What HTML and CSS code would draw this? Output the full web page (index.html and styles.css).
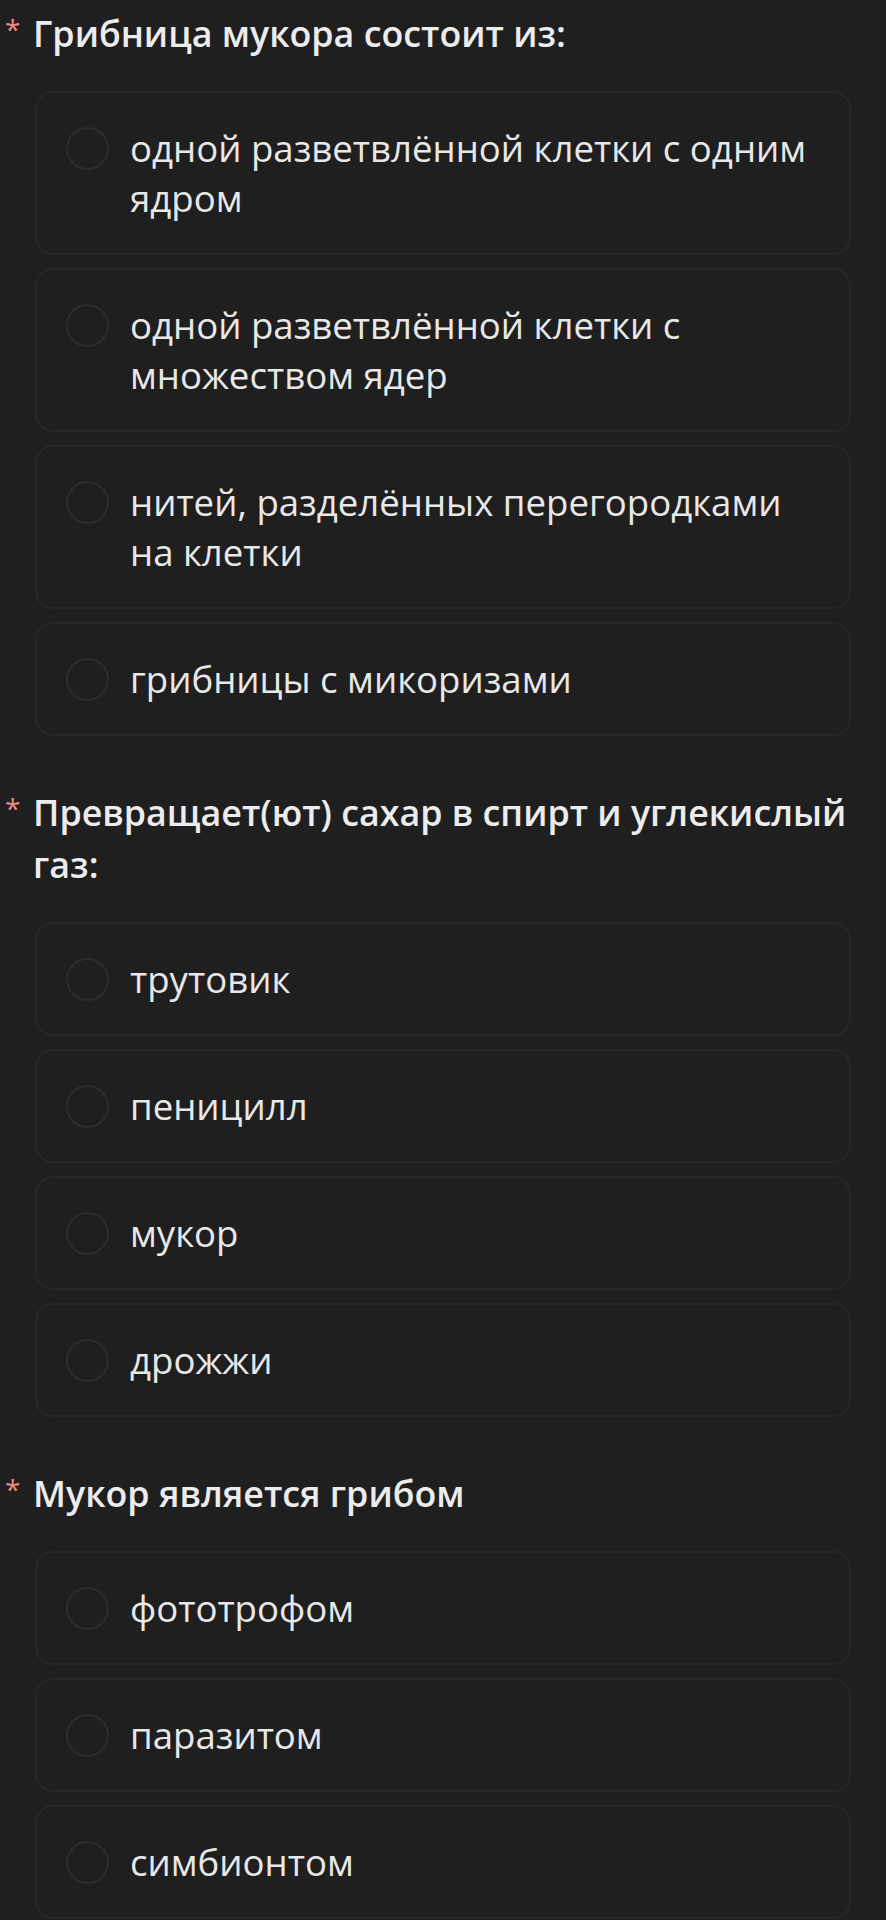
FILE: index.html
```html
<!DOCTYPE html>
<html lang="ru">
<head>
<meta charset="utf-8">
<title>Тест</title>
<link rel="stylesheet" href="styles.css">
</head>
<body>
<main class="form">
  <section class="question">
    <h2 class="q-title"><span class="star">*</span><span class="q-text">Грибница мукора состоит из:</span></h2>
    <div class="options">
      <label class="option"><span class="radio"></span><span class="opt-text">одной разветвлённой клетки с одним ядром</span></label>
      <label class="option"><span class="radio"></span><span class="opt-text">одной разветвлённой клетки с множеством ядер</span></label>
      <label class="option"><span class="radio"></span><span class="opt-text">нитей, разделённых перегородками на клетки</span></label>
      <label class="option"><span class="radio"></span><span class="opt-text">грибницы с микоризами</span></label>
    </div>
  </section>
  <section class="question">
    <h2 class="q-title"><span class="star">*</span><span class="q-text">Превращает(ют) сахар в спирт и углекислый газ:</span></h2>
    <div class="options">
      <label class="option"><span class="radio"></span><span class="opt-text">трутовик</span></label>
      <label class="option"><span class="radio"></span><span class="opt-text">пеницилл</span></label>
      <label class="option"><span class="radio"></span><span class="opt-text">мукор</span></label>
      <label class="option"><span class="radio"></span><span class="opt-text">дрожжи</span></label>
    </div>
  </section>
  <section class="question">
    <h2 class="q-title"><span class="star">*</span><span class="q-text">Мукор является грибом</span></h2>
    <div class="options">
      <label class="option"><span class="radio"></span><span class="opt-text">фототрофом</span></label>
      <label class="option"><span class="radio"></span><span class="opt-text">паразитом</span></label>
      <label class="option"><span class="radio"></span><span class="opt-text">симбионтом</span></label>
    </div>
  </section>
</main>
</body>
</html>
```

FILE: styles.css
```css
html, body {
  margin: 0;
  padding: 0;
  background: #1f1f1f;
}

body {
  font-family: "Open Sans", "Noto Sans", sans-serif;
  color: #e8e8e8;
}

.form {
  padding: 7px 35px 0 35px;
}

.question + .question {
  margin-top: 50px;
}

.q-title {
  display: flex;
  align-items: flex-start;
  margin: 0 0 32px -30px;
  font-size: 35.8px;
  font-weight: 600;
  line-height: 52px;
  color: #ececec;
}

.star {
  flex: 0 0 28px;
  width: 28px;
  padding-left: 0;
  font-size: 28px;
  line-height: 44px;
  color: #ef8a80;
  font-weight: 400;
}

.q-text {
  flex: 1;
}

.options {
  display: flex;
  flex-direction: column;
  gap: 13px;
}

.option {
  display: flex;
  align-items: flex-start;
  gap: 21px;
  padding: 30px 30px 30px 29px;
  border: 2px solid #272727;
  border-radius: 18px;
  background: #1f1f1f;
}

.radio {
  flex: 0 0 auto;
  width: 43px;
  height: 43px;
  margin-top: 3.5px;
  box-sizing: border-box;
  border: 2px solid #2d2d2d;
  border-radius: 50%;
}

.opt-text {
  font-size: 36.6px;
  line-height: 50px;
  color: #e8e8e8;
}
```
